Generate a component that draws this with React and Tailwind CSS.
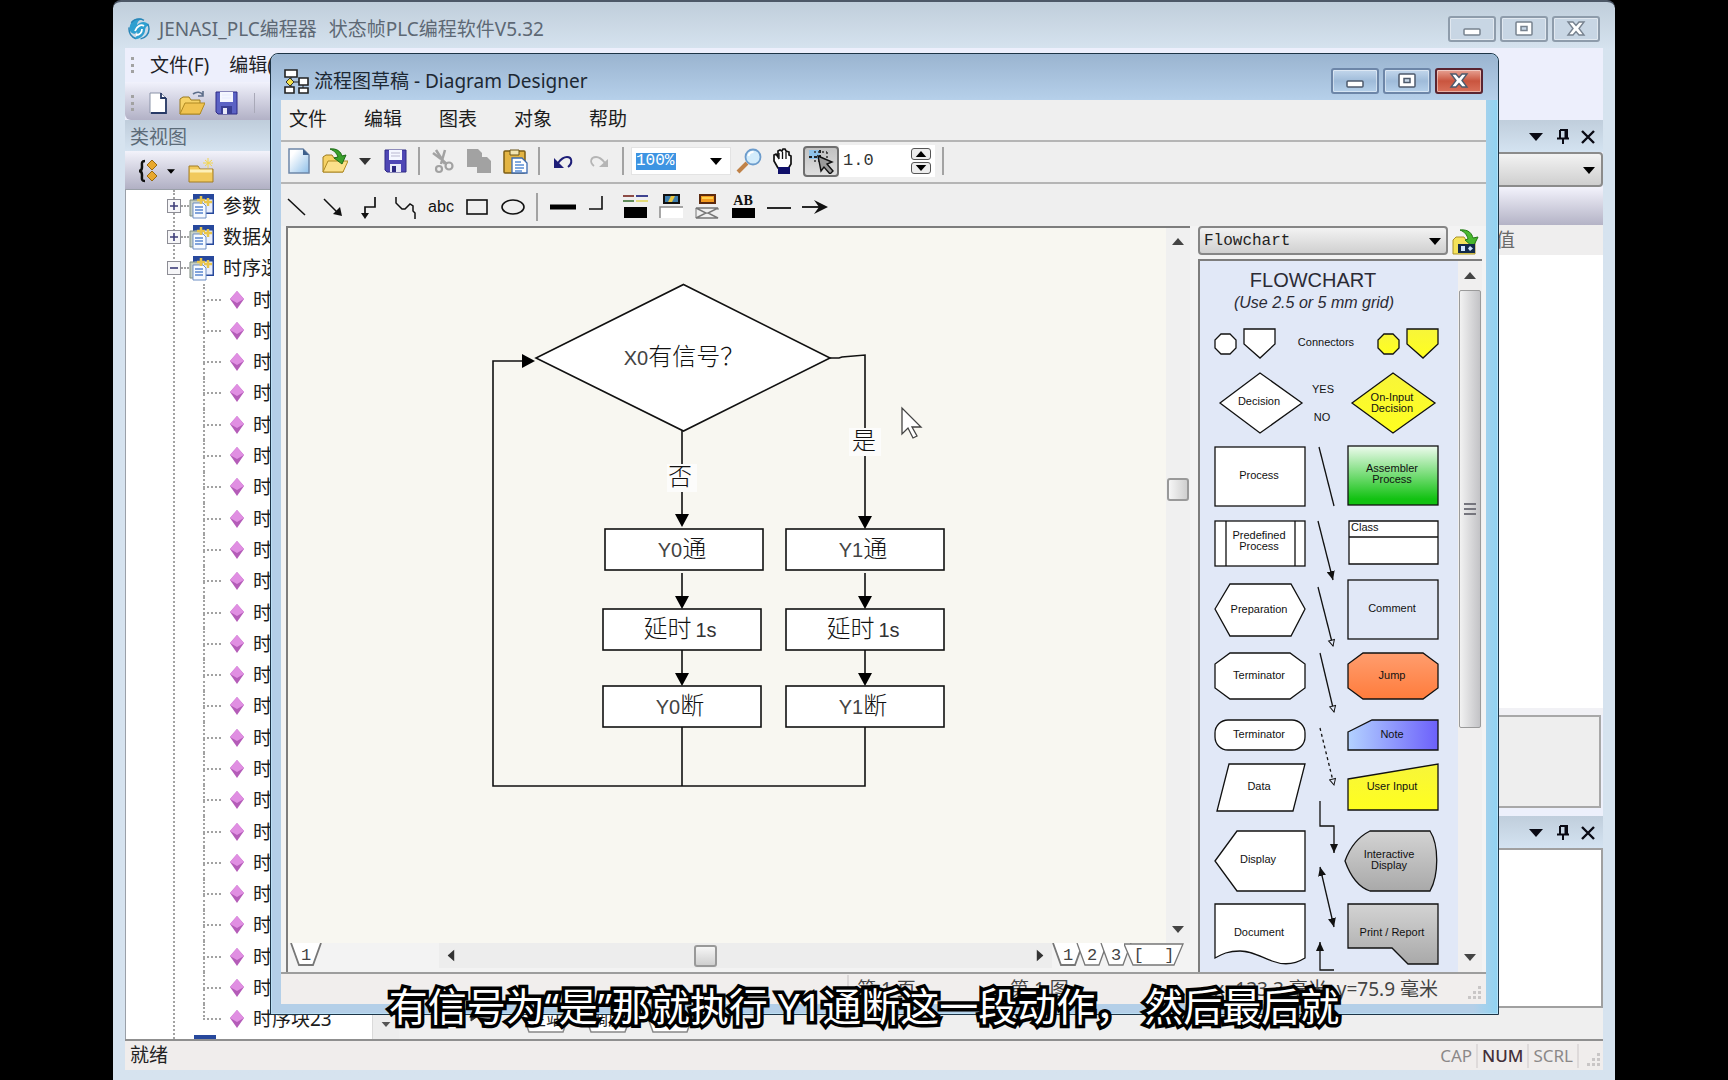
const UI = 'font-["Noto_Sans","Noto_Sans_CJK_SC",sans-serif]';
const MONO = 'font-["Liberation_Mono","Noto_Sans_CJK_SC",monospace]';

/* ---------- small shared pieces ---------- */

function Svg({ w = 26, h = 26, children, className = "" }) {
  return (
    <svg width={w} height={h} viewBox={`0 0 ${w} ${h}`} fill="none" className={`block shrink-0 ${className}`} aria-hidden="true">
      {children}
    </svg>
  );
}

function Down({ w = 14, h = 8, className = "" }) {
  return (
    <svg width={w} height={h} viewBox="0 0 14 8" className={`block shrink-0 ${className}`} aria-hidden="true">
      <path d="M0 0h14L7 8z" fill="currentColor" />
    </svg>
  );
}

function Grip() {
  return (
    <Svg w={14} h={14}>
      <path d="M10 0h3v3h-3zM5 5h3v3H5zM10 5h3v3h-3zM0 10h3v3H0zM5 10h3v3H5zM10 10h3v3h-3z" fill="#c9c6c6" />
    </Svg>
  );
}

function CaptionButton({ kind, active }) {
  const tone = active
    ? kind === "close"
      ? "border-[#5a2430] bg-linear-to-b from-[#e6a193] via-[#c9553f] to-[#d9705a]"
      : "border-[#6d86a8] bg-linear-to-b from-[#c3d7ec] via-[#9fbbd9] to-[#b5d0ea]"
    : "border-[#8e9cab] bg-[#c8d6e4]";
  const line = active ? "#4d5a6c" : "#77828f";
  return (
    <button type="button" aria-label={kind} className={`w-12 h-[26px] rounded-[3px] border-2 flex items-center justify-center shadow-[inset_0_0_0_1px_rgba(255,255,255,0.45)] ${tone}`}>
      <Svg w={20} h={18}>
        {kind === "minimize" && <rect x="2" y="9" width="16" height="6" rx="1" fill="#fff" stroke={line} strokeWidth="1.5" />}
        {kind === "maximize" && (
          <>
            <rect x="2" y="2" width="16" height="13" rx="1" fill="#fff" stroke={line} strokeWidth="1.5" />
            <rect x="7" y="6.5" width="6" height="4" fill="#c8d8e8" stroke={line} strokeWidth="1.5" />
          </>
        )}
        {kind === "close" && (
          <path d="M2 2h5l3 3.500L13 2h5l-5 6.500 5 6.500h-5l-3-3.500L7 15H2l5-6.500z" fill="#fff" stroke={line} strokeWidth="1.4" />
        )}
      </Svg>
    </button>
  );
}

function CaptionButtons({ active }) {
  return (
    <div className="flex gap-1">
      <CaptionButton kind="minimize" active={active} />
      <CaptionButton kind="maximize" active={active} />
      <CaptionButton kind="close" active={active} />
    </div>
  );
}

/* ---------- icons ---------- */

function FileIcon() {
  return (
    <Svg>
      <path d="M3 1h14l6 6v18H3z" fill="url(#page)" stroke="#6d87a8" strokeWidth="1.5" />
      <path d="M17 1v6h6z" fill="#3d5f8c" />
      <defs>
        <linearGradient id="page" x1="0" y1="0" x2="1" y2="1">
          <stop offset="0.2" stopColor="#fff" />
          <stop offset="1" stopColor="#8fc0ea" />
        </linearGradient>
      </defs>
    </Svg>
  );
}

function PlainFileIcon() {
  return (
    <Svg>
      <path d="M5 3h11l5 5v15H5z" fill="#fff" stroke="#8a93a8" />
      <path d="M16 3v5h5M21 8v15H6" stroke="#283a66" strokeWidth="1.8" />
    </Svg>
  );
}

function FolderIcon({ arrow }) {
  return (
    <Svg>
      <path d="M1 24V9l3-2h6l2 3h9v14z" fill="#f6d266" stroke="#9b7a1d" />
      <path d="M1 24l5-11h20l-5 11z" fill={arrow ? "#fbe08a" : "#f0c350"} stroke="#b08a22" />
      {arrow === "green" ? (
        <path d="M8 1c7-1 11 3 12 7l4-1-4 9-8-6 4-1c-1-3-3-6-8-8z" fill="#3aa02c" stroke="#1e6b17" />
      ) : (
        <path d="M14 4c4-3 8-2 10 1M24 1v5h-5" stroke="#5d6e8a" strokeWidth="1.6" />
      )}
    </Svg>
  );
}

function StencilFolderIcon() {
  return (
    <Svg w={28} h={28}>
      <path d="M1 26V12l3-3h8l2 3h9v14z" fill="#f4e25a" stroke="#a9922a" />
      <path d="M8 2c9-1 12 4 13 8l5-1-5 10-8-7 3-1c-1-4-3-7-8-9z" fill="#49b82e" stroke="#257a17" />
      <rect x="6" y="16" width="17" height="9" fill="#122a4a" />
      <path d="M9 18h4v5H9zM18 18l3 2.500-3 2.500-2-2.500z" fill="#cfe6ff" />
    </Svg>
  );
}

function SaveIcon({ solid }) {
  return (
    <Svg>
      <path d="M3 2h21v22H5l-2-2z" fill={solid ? "#5b62c4" : "#4f47b5"} stroke="#2f2a86" />
      <path d="M7 2h13v10H7z" fill="#f4f6ff" />
      <path d="M9 5h9M9 8h9" stroke={solid ? "#e7eaff" : "#b9b7cf"} />
      <path d="M8 16h11v8H8z" fill={solid ? "#3a3f94" : "#e8e9f7"} />
      <path d="M10 18h4v6h-4z" fill={solid ? "#e8e9f7" : "#2b2780"} />
    </Svg>
  );
}

function CutIcon() {
  return (
    <Svg>
      <path d="M6 2l9 14M15 2l-4 14M3 5l8 6" stroke="#a2a2a2" strokeWidth="2.5" />
      <circle cx="9" cy="21" r="3" stroke="#a2a2a2" strokeWidth="2.2" />
      <circle cx="19" cy="18" r="3.5" stroke="#a2a2a2" strokeWidth="2.2" />
      <path d="M12 12l5 4" stroke="#a2a2a2" strokeWidth="2.5" />
    </Svg>
  );
}

function CopyIcon() {
  return (
    <Svg>
      <path d="M1 1h11l4 4v4h5l4 4v12H11v-6H1z" fill="#a2a2a2" />
    </Svg>
  );
}

function PasteIcon() {
  return (
    <Svg>
      <rect x="2" y="3" width="21" height="22" rx="1" fill="#e3b443" stroke="#7d5d15" strokeWidth="1.5" />
      <path d="M8 2h9v5H8z" fill="#f3e5b0" stroke="#6b5419" />
      <path d="M10 10h10l5 5v10H10z" fill="#fff" stroke="#3d6bb0" strokeWidth="1.3" />
      <path d="M13 14h6M13 17h9M13 20h9M13 23h7" stroke="#5a8fd6" strokeWidth="1.3" />
    </Svg>
  );
}

function UndoIcon({ redo }) {
  return (
    <Svg>
      {redo ? (
        <>
          <path d="M8 18c-5-4-3-9 2-9 4 0 6 2 9 6" stroke="#b5b5b5" strokeWidth="1.8" />
          <path d="M22 11v8h-9z" fill="#b5b5b5" />
        </>
      ) : (
        <>
          <path d="M18 19c5-4 4-10-1-10-4 0-6 2-9 6" stroke="#1e1e78" strokeWidth="2" />
          <path d="M4 10v10h10z" fill="#1e1e78" />
        </>
      )}
    </Svg>
  );
}

function ZoomIcon() {
  return (
    <Svg>
      <path d="M2 24l9-9" stroke="#c08248" strokeWidth="4" />
      <circle cx="17" cy="9" r="7.5" fill="#d3ecfb" stroke="#6c9ccc" strokeWidth="1.8" />
      <path d="M12.500 8a5 5 0 0 1 5-4" stroke="#fff" strokeWidth="2" />
    </Svg>
  );
}

function HandIcon() {
  return (
    <Svg>
      <path d="M8 20l-4-7V7l2-1 2 3V3l2-1 2 1 1-2h2l1 2 3 1v3l2 1v8l-3 5z" fill="#fff" stroke="#111" strokeWidth="1.7" />
      <path d="M9 5v6M12.500 4v7M16 4v7" stroke="#111" strokeWidth="1.3" />
      <path d="M8 19h12v7H8z" fill="#10106a" />
    </Svg>
  );
}

function SnapIcon() {
  return (
    <Svg w={28}>
      <path d="M2 2h11v9H2z" fill="#8ec3ea" />
      <path d="M2 9h12M13 2v14" stroke="#222" strokeWidth="2" strokeDasharray="3 2" />
      <path d="M7 4h13M7 13h10M20 4v6" stroke="#333" strokeWidth="1.5" strokeDasharray="2 2" />
      <path d="M11 8l14 6-5 2 6 7-3 3-6-7-3 4z" fill="#9a9a9a" stroke="#111" strokeWidth="1.4" />
    </Svg>
  );
}

const DRAW_TOOLS = [
  ["直线", <path d="M4 5l17 16" stroke="#111" strokeWidth="1.5" />],
  ["箭头", <><path d="M4 5l15 15" stroke="#111" strokeWidth="1.5" /><path d="M22 22l-9-2 7-7z" fill="#111" /></>],
  ["折线", <><path d="M19 3v10H9v9" stroke="#111" strokeWidth="1.7" /><path d="M5 19h8l-4 6z" fill="#111" /></>],
  ["曲线", <path d="M4 3v6l6 6h3l5-5 3 2v5l2 2v6" stroke="#111" strokeWidth="1.5" />],
  ["文本", null],
  ["矩形", <rect x="3" y="6" width="20" height="14" stroke="#111" strokeWidth="1.6" />],
  ["椭圆", <ellipse cx="13" cy="13" rx="11" ry="7" stroke="#111" strokeWidth="1.6" />],
];

const STYLE_TOOLS = [
  ["线宽", <path d="M0 13h26" stroke="#000" strokeWidth="5" />],
  ["拐角", <path d="M3 15h13V2" stroke="#111" strokeWidth="1.6" />],
  ["线条颜色", <><path d="M1 2h11" stroke="#8d4b45" strokeWidth="2" /><path d="M14 2h12" stroke="#3e4390" strokeWidth="2" /><path d="M1 7h11" stroke="#5f8a5a" strokeWidth="2" /><path d="M14 7h12" stroke="#e4dc7a" strokeWidth="2" /><path d="M2 13h23v11H2z" fill="#000" /></>],
  ["填充颜色", <><path d="M6 1h15v8H6z" fill="#3f7fae" stroke="#111" strokeWidth="2" /><path d="M13 2h4l-3 6h-4z" fill="#e9c640" /><path d="M2 13h23v11H2z" fill="#fff" /><path d="M2 24V13h23" stroke="#8b8b8b" strokeWidth="1.5" /></>],
  ["渐变", <><path d="M6 1h15v8H6z" fill="#f39a1f" stroke="#5d2a0e" strokeWidth="2" /><path d="M8 3h11v2H8z" fill="#ffd04a" /><path d="M2 14h22L14 19l10 5H2l10-5z" stroke="#777" strokeWidth="1.4" /><path d="M2 14v10M24 14v2" stroke="#777" /></>],
  ["文字颜色", <><text x="13" y="11" textAnchor="middle" fontFamily="Liberation Serif" fontSize="14" fontWeight="700" fill="#111">AB</text><path d="M2 14h23v10H2z" fill="#000" /></>],
  ["无箭头", <path d="M1 14h24" stroke="#111" strokeWidth="1.8" />],
  ["有箭头", <><path d="M0 13h22" stroke="#111" strokeWidth="1.8" /><path d="M12 6l14 7-14 7 5-7z" fill="#111" /></>],
];

function Tool({ label, children, className = "w-8" }) {
  return (
    <button type="button" aria-label={label} className={`flex items-center justify-center shrink-0 ${className}`}>
      {children}
    </button>
  );
}

function Sep() {
  return (
    <div className="w-2 shrink-0 flex justify-center">
      <div className="w-0.5 h-7 bg-[#a3a3a3]" />
    </div>
  );
}

/* ---------- programmer window (behind) ---------- */

function Dots({ className }) {
  return <div className={`border-dotted border-[#a2a2a2] ${className}`} />;
}

function ClassIcon() {
  return (
    <Svg>
      <path d="M4 1h21v20H4z" fill="#27489c" />
      <path d="M5 6h19v14H5z" fill="#e8eefc" stroke="#27489c" />
      <path d="M1 7h12v16H1z" fill="#c7d0c4" stroke="#7d8b80" />
      <path d="M4 10h10l3 3v12H4z" fill="#f6faff" stroke="#6f8fc4" />
      <path d="M6 14h8M6 17h8M6 20h8" stroke="#5a86cf" strokeWidth="1.4" />
      <path d="M12 3v8M8 7h8M19 5v8M15 9h8" stroke="#e9c54a" strokeWidth="2.5" />
    </Svg>
  );
}

function GroupRow({ label, open }) {
  return (
    <li className="flex-1 flex items-center pl-[41px]">
      <Svg w={14} h={14} className="bg-white">
        <rect x="0.5" y="0.5" width="13" height="13" fill="#f6f6f8" stroke="#8d8d95" />
        <path d={open ? "M3 7h8" : "M3 7h8M7 3v8"} stroke="#3c3c78" strokeWidth="1.6" />
      </Svg>
      <Dots className="w-2 border-t-2" />
      <ClassIcon />
      <span className="ml-2 whitespace-nowrap">{label}</span>
    </li>
  );
}

function LeafRow({ label, last }) {
  return (
    <li className="flex-1 flex items-stretch pl-[77px]">
      <div className="w-[18px] flex flex-col">
        <Dots className="flex-1 border-l-2 border-b-2" />
        <Dots className={`flex-1 ${last ? "" : "border-l-2"}`} />
      </div>
      <div className="flex items-center">
        <Svg w={16} h={22} className="mx-2">
          <path d="M8 2l7 8-7 10-7-10z" fill="#b45cb8" />
          <path d="M8 2l7 8-7 4-7-4z" fill="#e08fe2" />
        </Svg>
        <span className="whitespace-nowrap">{label}</span>
      </div>
    </li>
  );
}

function ClassView() {
  const leaves = Array.from({ length: 24 }, (_, i) => `时序块${i}`);
  return (
    <aside className="w-[274px] shrink-0 flex flex-col">
      <div className="h-[31px] shrink-0 flex items-center pl-[5px] pt-1 text-[19px] text-[#5c6b78] bg-linear-to-b from-[#bfcddb] to-[#d5e3f0]">类视图</div>
      <div className="h-[38px] shrink-0 flex items-center pl-3 pt-0.5 gap-2 bg-linear-to-b from-[#f3f3fb] to-[#b1b0c4]">
        <Svg w={22} h={24}>
          <path d="M8 2C4 2 5 5 5 8s-1 4-3 4c2 0 3 1 3 4s-1 6 3 6" stroke="#111" strokeWidth="2.5" />
          <path d="M15 1l5 5-5 5-5-5zM15 12l5 5-5 5-5-5z" fill="#e8a82c" stroke="#996a12" />
        </Svg>
        <Down w={8} h={5} className="text-black" />
        <Svg w={28} className="ml-1">
          <path d="M2 24V8h9l2 3h13v13z" fill="#f1c95c" stroke="#a27c24" />
          <path d="M3 13h22" stroke="#fdf0b9" strokeWidth="3" />
          <path d="M21 0v10M16 5h10M18 2l7 6M25 2l-7 6" stroke="#f4d64e" />
        </Svg>
      </div>
      <div className="flex-1 min-h-0 flex bg-white border-l border-t border-[#9aa0a8] overflow-hidden">
        <div className="flex-1 min-w-0 relative flex flex-col">
          <Dots className="absolute left-[47px] inset-y-0 border-l-2" />
          <ul className="relative flex-1 flex flex-col text-[19px] leading-5 text-[#1c1c1c]">
            <GroupRow label="参数" />
            <GroupRow label="数据处理" />
            <GroupRow label="时序逻辑" open />
            {leaves.map((l, i) => (
              <LeafRow key={l} label={l} last={i === leaves.length - 1} />
            ))}
          </ul>
          <div className="relative h-1 w-[22px] ml-[68px] bg-[#27489c]" />
        </div>
        <div className="w-[27px] shrink-0 bg-[#ededed] flex items-end justify-center pb-3 border-l border-[#dadada]">
          <Down w={10} h={5} className="text-[#555]" />
        </div>
      </div>
    </aside>
  );
}

function DockTitle() {
  return (
    <div className="h-8 shrink-0 flex items-center justify-end gap-3 pr-2 pt-0.5 text-[#0a0a14] bg-linear-to-b from-[#c0cedc] to-[#d4e3f1]">
      <Down w={14} h={8} className="mr-0.5" />
      <Svg w={12} h={16}>
        <path d="M3 1h7v8M3 1v8M0 9.500h12M6 10v5M8.500 1v8" stroke="currentColor" strokeWidth="2" />
      </Svg>
      <Svg w={14} h={14}>
        <path d="M1 1l12 12M13 1L1 13" stroke="currentColor" strokeWidth="2.4" />
      </Svg>
    </div>
  );
}

function PropertyDock() {
  return (
    <aside className="w-[320px] shrink-0 flex flex-col bg-[#edf0fb]">
      <DockTitle />
      <div className="relative shrink-0">
        <select aria-label="对象" className="block appearance-none w-full h-[35px] rounded-[4px] border-2 border-[#8b8b8b] bg-linear-to-b from-[#f3f3f3] to-[#cfcfcf]" />
        <Down w={12} h={7} className="absolute right-2 top-[15px] text-black" />
      </div>
      <div className="h-[38px] shrink-0 bg-linear-to-b from-[#f3f3fc] to-[#b4b3c6]" />
      <div className="h-[30px] shrink-0 bg-[#efeeee] flex justify-end items-center text-[19px] text-[#6a6a6a]">
        <div className="w-[107px]">值</div>
      </div>
      <div className="flex-1 min-h-0 bg-white" />
      <div className="h-[7px] shrink-0 bg-[#f1f1f5]" />
      <div className="h-[93px] shrink-0 mr-0.5 bg-[#eeeeee] border-2 border-[#a8a8a8]" />
      <div className="h-2 shrink-0" />
      <DockTitle />
      <div className="h-40 shrink-0 bg-white border-2 border-[#a0a0a0]" />
      <div className="h-[31px] shrink-0 bg-[#efefef]" />
    </aside>
  );
}

function SheetTab({ label }) {
  return (
    <div className="relative w-[54px] h-7 flex justify-center text-[17px] leading-6 text-[#222]">
      <Svg w={54} h={28} className="absolute inset-0">
        <path d="M1 0l9 25h34l9-25" fill="#fff" stroke="#888" strokeWidth="1.5" />
      </Svg>
      <span className="relative">{label}</span>
    </div>
  );
}

function ProgrammerWindow() {
  return (
    <div className="h-full flex flex-col rounded-t-lg border-t-2 border-[#4d5867] bg-linear-to-b from-[#c0cedb] to-[#d6e3ef] to-[48px] px-3 pb-[10px]">
      <header className="h-[46px] shrink-0 flex items-center justify-between pl-0.5 pt-2 pr-[3px]">
        <div className="flex items-center gap-2">
          <Svg w={24} h={24}>
            <path d="M3 14C1 6 8 0 15 2c-3 1-5 3-5 6 4-4 9-4 12 0-3 1-4 3-4 6-1 5-6 9-11 8 3-2 4-5 3-7-2 3-5 2-7-1z" fill="#2f9fd0" />
            <circle cx="12" cy="12" r="10" stroke="#2a86b8" strokeWidth="1.5" strokeDasharray="14 5" />
            <path d="M8 14c2-5 6-7 9-5M9 18c4 0 6-3 6-6" stroke="#fff" strokeWidth="1.8" />
          </Svg>
          <h1 className="flex gap-3 text-[19px] text-[#5d6874] whitespace-nowrap">
            <span>JENASI_PLC编程器</span>
            <span>状态帧PLC编程软件V5.32</span>
          </h1>
        </div>
        <CaptionButtons />
      </header>
      <nav className="h-[34px] shrink-0 flex items-center gap-5 pl-[6px] bg-[#edeffc] text-[19px] text-[#1f1f28]">
        <Dots className="h-4 border-l-[3px] -mr-1" />
        <button type="button">文件(F)</button>
        <button type="button">编辑(E)</button>
      </nav>
      <div className="h-[38px] shrink-0 flex bg-[#edeffc]">
        <div className="flex items-center gap-[6px] w-[320px] pl-[6px] pt-1 rounded-bl-md bg-linear-to-b from-[#f1f2fc] to-[#b2b1c6]">
          <Dots className="h-4 border-l-[3px] mr-1" />
          <Tool label="新建" className="w-7"><PlainFileIcon /></Tool>
          <Tool label="打开" className="w-7"><FolderIcon /></Tool>
          <Tool label="保存" className="w-7"><SaveIcon solid /></Tool>
          <div className="w-px h-5 ml-2 bg-[#a9a9b8]" />
        </div>
      </div>
      <div className="flex-1 min-h-0 flex border-b-2 border-[#8f8f8f]">
        <ClassView />
        <main className="flex-1 flex flex-col justify-end bg-[#efefef]">
          <div className="flex items-start pl-[48px] h-[32px] gap-3 text-[#333]">
            <Svg w={60} h={20}>
              <path d="M14 4v10l-6-5zM24 4l7 5-7 5zM44 4l6 5-6 5zM52 4v10" fill="#333" stroke="#333" />
            </Svg>
            <div className="flex gap-2">
              <SheetTab label="主站" />
              <SheetTab label="调度" />
              <SheetTab label="宏库" />
            </div>
          </div>
        </main>
        <PropertyDock />
      </div>
      <footer className="h-[29px] shrink-0 flex items-center justify-between bg-[#f0edec] pl-[5px] pr-0.5 text-[19px] text-[#222]">
        <span>就绪</span>
        <div className="flex items-center text-[17px] text-[#8b8888]">
          <span className="pr-1 border-r-2 border-[#dedada] leading-6">CAP</span>
          <span className="px-1 border-r-2 border-[#dedada] leading-6 font-medium text-[#43303a]">NUM</span>
          <span className="px-1 border-r-2 border-[#dedada] leading-6">SCRL</span>
          <div className="pl-2 pt-2"><Grip /></div>
        </div>
      </footer>
    </div>
  );
}

/* ---------- flowchart drawing ---------- */

const STEPS = [
  { x: 317, y: 301, a: "Y0", b: "通" },
  { x: 315, y: 381, b: "延时", c: "1s" },
  { x: 315, y: 458, a: "Y0", b: "断" },
  { x: 498, y: 301, a: "Y1", b: "通" },
  { x: 498, y: 381, b: "延时", c: "1s" },
  { x: 498, y: 458, a: "Y1", b: "断" },
];

function Label({ x, y, a, b, c }) {
  return (
    <text x={x} y={y} textAnchor="middle" fontSize="24" fontWeight="300" fill="#111" fontFamily="Liberation Sans, Noto Sans CJK SC, sans-serif">
      {a && <tspan fontSize="20" fill="#444">{a}</tspan>}
      {b}
      {c && <tspan fontSize="20" fill="#333" dx="4">{c}</tspan>}
    </text>
  );
}

function Tip({ x, y }) {
  return <path d={`M${x - 7} ${y - 13}h14l-7 13z`} fill="#000" />;
}

function Flowchart() {
  return (
    <svg width="880" height="717" viewBox="0 0 880 717" fill="none" className="block" role="img" aria-label="流程图">
      <g stroke="#111" strokeWidth="1.6">
        <path d="M395.500 56.500L542 130 395.500 203 248 130z" fill="#fff" />
        <path d="M542 130h9l3-1 23-2v166" />
        <path d="M394 203v90M394 345v26M394 422v26M577 345v26M577 422v26" />
        <path d="M394 499v59M577 499v59H205V133h32" />
      </g>
      <path d="M234 126v14l13-7z" fill="#000" />
      <Tip x={394} y={299} />
      <Tip x={577} y={301} />
      <Tip x={394} y={381} />
      <Tip x={577} y={381} />
      <Tip x={394} y={458} />
      <Tip x={577} y={458} />
      <rect x="379" y="236" width="30" height="28" fill="#fcfcfb" />
      <rect x="561" y="200" width="32" height="28" fill="#fcfcfb" />
      <Label x={392} y={257} b="否" />
      <Label x={576} y={221} b="是" />
      <Label x={396} y={137} a="X0" b="有信号？" />
      {STEPS.map((s) => (
        <g key={`${s.x}-${s.y}`}>
          <rect x={s.x} y={s.y} width="158" height="41" fill="#fff" stroke="#111" strokeWidth="1.6" />
          <Label x={s.x + 77} y={s.y + 28} a={s.a} b={s.b} c={s.c} />
        </g>
      ))}
      <path d="M614 180v26l6-6 5 10 4-2-5-9h9z" fill="#fff" stroke="#444" strokeWidth="1.3" />
    </svg>
  );
}

function StencilText({ x, y, children, anchor = "middle" }) {
  return (
    <text x={x} y={y} textAnchor={anchor} fontSize="11" stroke="none" fill="#111">
      {children}
    </text>
  );
}

function Stencil() {
  return (
    <svg width="258" height="711" viewBox="0 0 258 711" className="block" fontFamily="Liberation Sans, sans-serif" role="img" aria-label="Flowchart 模板">
      <defs>
        <linearGradient id="sYellow" x2="0" y2="1"><stop stopColor="#f7f53a" /><stop offset="1" stopColor="#ffff1f" /></linearGradient>
        <linearGradient id="sGreen" x2="0" y2="1"><stop stopColor="#eefbee" /><stop offset="0.9" stopColor="#12c212" /></linearGradient>
        <linearGradient id="sOrange" x2="0" y2="1"><stop stopColor="#ff9d6e" /><stop offset="1" stopColor="#ff7c3c" /></linearGradient>
        <linearGradient id="sBlue"><stop stopColor="#b3d2ff" /><stop offset="1" stopColor="#6c60fb" /></linearGradient>
        <linearGradient id="sGray" x2="0" y2="1"><stop stopColor="#d3d3d3" /><stop offset="1" stopColor="#a9a9a9" /></linearGradient>
        <marker id="tipFull" markerUnits="userSpaceOnUse" markerWidth="10" markerHeight="8" refX="9" refY="4" orient="auto-start-reverse"><path d="M0 0l9 4-9 4z" fill="#111" stroke="none" /></marker>
        <marker id="tipOpen" markerUnits="userSpaceOnUse" markerWidth="9" markerHeight="8" refX="7" refY="4" orient="auto"><path d="M1 1l6 3-6 3z" fill="#e1e8f7" stroke="#111" /></marker>
      </defs>
      <text x="113" y="26" textAnchor="middle" fontSize="20" fill="#2b2b35">FLOWCHART</text>
      <text x="114" y="47" textAnchor="middle" fontSize="16" fontStyle="italic" fill="#2b2b35">(Use 2.5 or 5 mm grid)</text>

      <g fill="#fff" stroke="#111" strokeWidth="1.3">
        <path d="M21 73h9l6 6v8l-6 6h-9l-6-6v-8z" />
        <path d="M44 68h31v15L60 97 44 83z" />
        <path d="M20 142l40-30 42 30-42 30z" />
        <rect x="15" y="186" width="90" height="59" />
        <rect x="15" y="260" width="90" height="45" />
        <path d="M26 260v45M95 260v45" />
        <path d="M15 348l15-25h61l14 25-14 27H30z" />
        <path d="M30 392h60l15 11v24l-15 11H30l-15-11v-24z" />
        <rect x="15" y="459" width="90" height="30" rx="13" />
        <path d="M29 503h76l-12 47H17z" />
        <path d="M15 600l22-30h68v60H37z" />
        <path d="M15 643h90v54c-8 5-20 8-33 3S52 690 40 690s-18 3-25 7z" />
        <path d="M149 260h89v43h-89zM149 276h89" />
      </g>
      <g stroke="#111" strokeWidth="1.3">
        <path d="M184 73h9l6 6v8l-6 6h-9l-6-6v-8z" fill="url(#sYellow)" />
        <path d="M207 68h31v15l-15 14-16-14z" fill="url(#sYellow)" />
        <path d="M152 142l41-30 42 30-42 30z" fill="url(#sYellow)" />
        <rect x="148" y="185" width="90" height="59" fill="url(#sGreen)" />
        <rect x="148" y="319" width="90" height="59" fill="none" />
        <path d="M163 392h60l15 11v24l-15 11h-60l-15-11v-24z" fill="url(#sOrange)" />
        <path d="M148 471l24-12h66v30h-90z" fill="url(#sBlue)" />
        <path d="M148 518l90-15v46h-90z" fill="url(#sYellow)" />
        <path d="M170 570h60c9 14 9 44 0 60h-60c-12-4-20-16-25-30 5-14 13-24 25-30z" fill="url(#sGray)" />
        <path d="M148 643h90v60h-30l-16-16h-44z" fill="url(#sGray)" />
      </g>
      <g fill="none" stroke="#111" strokeWidth="1.3">
        <path d="M119 186l15 59" />
        <path d="M118 260l15 59" markerEnd="url(#tipFull)" />
        <path d="M118 326l15 59" markerEnd="url(#tipOpen)" />
        <path d="M120 392l14 59" markerEnd="url(#tipOpen)" />
        <path d="M120 467l14 57" strokeDasharray="3 3" markerEnd="url(#tipOpen)" />
        <path d="M120 540v25h14v27" markerEnd="url(#tipFull)" />
        <path d="M120 606l14 60" markerStart="url(#tipFull)" markerEnd="url(#tipFull)" />
        <path d="M134 709h-14v-28" markerEnd="url(#tipFull)" />
      </g>

      <StencilText x={126} y={85}>Connectors</StencilText>
      <StencilText x={59} y={144}>Decision</StencilText>
      <StencilText x={123} y={132}>YES</StencilText>
      <StencilText x={122} y={160}>NO</StencilText>
      <StencilText x={192} y={140}>On-Input</StencilText>
      <StencilText x={192} y={151}>Decision</StencilText>
      <StencilText x={59} y={218}>Process</StencilText>
      <StencilText x={192} y={211}>Assembler</StencilText>
      <StencilText x={192} y={222}>Process</StencilText>
      <StencilText x={59} y={278}>Predefined</StencilText>
      <StencilText x={59} y={289}>Process</StencilText>
      <StencilText x={151} y={270} anchor="start">Class</StencilText>
      <StencilText x={59} y={352}>Preparation</StencilText>
      <StencilText x={192} y={351}>Comment</StencilText>
      <StencilText x={59} y={418}>Terminator</StencilText>
      <StencilText x={192} y={418}>Jump</StencilText>
      <StencilText x={59} y={477}>Terminator</StencilText>
      <StencilText x={192} y={477}>Note</StencilText>
      <StencilText x={59} y={529}>Data</StencilText>
      <StencilText x={192} y={529}>User Input</StencilText>
      <StencilText x={58} y={602}>Display</StencilText>
      <StencilText x={189} y={597}>Interactive</StencilText>
      <StencilText x={189} y={608}>Display</StencilText>
      <StencilText x={59} y={675}>Document</StencilText>
      <StencilText x={192} y={675}>Print / Report</StencilText>
    </svg>
  );
}

/* ---------- Diagram Designer window ---------- */

function PageTab({ label, active, className = "w-8", wide }) {
  return (
    <button type="button" className={`relative h-[25px] -mr-2 flex items-center justify-center whitespace-pre text-[17px] text-[#444] ${MONO} ${className}`}>
      <svg className="absolute inset-0 size-full" viewBox={wide ? "0 0 60 25" : "0 0 32 25"} fill="none" aria-hidden="true">
        <path d={wide ? "M0 1h59l-9 21H9z" : "M1 0l8 22h14l8-22"} fill="#fff" stroke="#777" strokeWidth={active ? 1.8 : 1.3} />
      </svg>
      <span className="relative">{label}</span>
    </button>
  );
}

function Designer() {
  return (
    <section className="absolute left-[157px] right-[116px] top-[53px] bottom-[65px] flex flex-col rounded-t-lg border border-[#1d3446] bg-linear-to-r from-[#b4cfe8] via-[#b4cfe8] via-98% to-[#8fd3f2] pl-[10px] pr-3 pb-[10px] shadow-[inset_0_0_0_1px_rgba(190,230,250,0.7)]">
      <header className="h-[46px] -ml-[10px] -mr-3 pl-3 pr-[15px] pt-2 shrink-0 rounded-t-lg flex items-center justify-between bg-linear-to-b from-[#9ab4d0] to-[#b6d0ea]">
        <div className="flex items-center gap-[5px]">
          <Svg>
            <path d="M2 2h12v7H2zM16 10h9v7h-9zM2 19h9v6H2zM16 20h9v5h-9z" fill="#fff" stroke="#222" strokeWidth="1.6" />
            <path d="M8 9v10M11 14h5M20 17v3" stroke="#222" />
            <path d="M7 10l4 4-4 4-4-4z" fill="#f2e04a" stroke="#333" />
          </Svg>
          <h2 className="text-[19px] text-[#1d2833] whitespace-nowrap">流程图草稿 - Diagram Designer</h2>
        </div>
        <CaptionButtons active />
      </header>

      <nav className="h-[42px] shrink-0 flex items-center gap-[37px] pl-2 pb-0.5 bg-[#efefef] border-b-2 border-[#b5b5b5] text-[19px] text-[#1c1c1c]">
        {["文件", "编辑", "图表", "对象", "帮助"].map((m) => (
          <button key={m} type="button">{m}</button>
        ))}
      </nav>

      <div className="h-[42px] shrink-0 flex items-center gap-1 pl-0.5 pb-0.5 bg-[#efefef] border-b-2 border-[#b5b5b5]">
        <Tool label="新建"><FileIcon /></Tool>
        <Tool label="打开"><FolderIcon arrow="green" /></Tool>
        <Tool label="最近文件" className="w-5"><Down w={12} h={7} className="text-[#333]" /></Tool>
        <Tool label="保存"><SaveIcon /></Tool>
        <Sep />
        <Tool label="剪切"><CutIcon /></Tool>
        <Tool label="复制"><CopyIcon /></Tool>
        <Tool label="粘贴"><PasteIcon /></Tool>
        <Sep />
        <Tool label="撤销"><UndoIcon /></Tool>
        <Tool label="重做"><UndoIcon redo /></Tool>
        <Sep />
        <div className="w-[100px] h-7 shrink-0 flex items-center justify-between px-1 bg-white border border-[#e3e3e3]">
          <input aria-label="缩放" defaultValue="100%" className={`w-10 h-[17px] bg-[#3d94e2] text-white text-[16px] leading-4 ${MONO}`} />
          <Down w={12} h={7} className="text-black mr-1" />
        </div>
        <Tool label="放大镜" className="w-7"><ZoomIcon /></Tool>
        <Tool label="平移"><HandIcon /></Tool>
        <Tool label="对齐网格" className="w-9 h-[31px] rounded-[4px] border-2 border-[#6f6f6f] bg-linear-to-b from-[#c2c2c2] to-[#dedede]"><SnapIcon /></Tool>
        <div className="w-24 h-8 -ml-1 shrink-0 flex items-center justify-between px-1 bg-white">
          <input aria-label="线宽" defaultValue="1.0" className={`w-12 h-5 text-[17px] text-[#333] ${MONO}`} />
          <div className="flex flex-col gap-0.5">
            <button type="button" aria-label="增加" className="w-5 h-3 rounded-[3px] border border-[#555] bg-[#ededed] flex items-center justify-center"><Down w={12} h={6} className="rotate-180" /></button>
            <button type="button" aria-label="减少" className="w-5 h-3 rounded-[3px] border border-[#555] bg-[#ededed] flex items-center justify-center"><Down w={12} h={6} /></button>
          </div>
        </div>
        <Sep />
      </div>

      <div className="h-[42px] shrink-0 flex items-center gap-1 pt-1 bg-[#efefef]">
        {DRAW_TOOLS.map(([name, art]) => (
          <Tool key={name} label={name}>
            {art ? <Svg>{art}</Svg> : <span className='text-[16px] text-[#111] font-["Liberation_Sans",sans-serif]'>abc</span>}
          </Tool>
        ))}
        <Sep />
        <div className="flex gap-1 pl-0.5">
          {STYLE_TOOLS.map(([name, art]) => (
            <Tool key={name} label={name}><Svg>{art}</Svg></Tool>
          ))}
        </div>
      </div>

      <div className="flex-1 min-h-0 flex gap-2 pl-[5px] pr-1 bg-[#f3f3f3]">
        <div className="flex-1 min-w-0 flex flex-col border-t-2 border-l-2 border-[#7d7d7d]">
          <div className="flex-1 min-h-0 flex">
            <div className="flex-1 min-w-0 overflow-hidden bg-[#f8f7f1]"><Flowchart /></div>
            <div className="w-6 shrink-0 flex flex-col items-center py-[10px] bg-[#f0f0f0]">
              <Down w={12} h={7} className="rotate-180 text-[#444]" />
              <div className="grow-[233]" />
              <div className="w-[22px] h-[23px] shrink-0 rounded-[3px] border-2 border-[#999] bg-linear-to-r from-[#f6f6f6] to-[#cfcfcf]" />
              <div className="grow-[424]" />
              <Down w={12} h={7} className="text-[#444]" />
            </div>
          </div>
          <div className="h-[25px] mb-1 shrink-0 flex">
            <PageTab label="1" active className="w-9" />
            <div className="flex-1 ml-[123px] flex items-center px-[6px] bg-[#ededed]">
              <Down w={12} h={7} className="rotate-90 text-[#333]" />
              <div className="grow-[233]" />
              <div className="w-[23px] h-[22px] shrink-0 rounded-[3px] border-2 border-[#999] bg-linear-to-b from-[#f6f6f6] to-[#cfcfcf]" />
              <div className="grow-[312]" />
              <Down w={12} h={7} className="-rotate-90 text-[#333]" />
            </div>
            <div className="flex pr-[14px]">
              <PageTab label="1" active />
              <PageTab label="2" />
              <PageTab label="3" />
              <PageTab label="[  ]" wide className="w-[60px]" />
            </div>
          </div>
        </div>

        <div className="w-[284px] shrink-0 flex flex-col">
          <div className="h-[33px] shrink-0 flex items-start gap-1">
            <div className="relative">
              <select aria-label="模板" className={`block appearance-none w-[250px] h-[29px] pl-1 rounded-[4px] border-2 border-[#868686] bg-linear-to-b from-[#f3f3f3] to-[#d0d0d0] text-[16px] leading-5 text-[#222] ${MONO}`}>
                <option>Flowchart</option>
              </select>
              <Down w={12} h={7} className="absolute right-[7px] top-3 text-black" />
            </div>
            <button type="button" aria-label="载入模板" className="pt-0.5"><StencilFolderIcon /></button>
          </div>
          <div className="flex-1 min-h-0 flex border-t-2 border-l-2 border-[#7d7d7d] bg-[#e1e8f7]">
            <div className="flex-1 min-w-0 overflow-hidden"><Stencil /></div>
            <div className="w-6 shrink-0 flex flex-col items-center bg-[#f0efef]">
              <Down w={12} h={7} className="rotate-180 text-[#444] my-[11px]" />
              <div className="grow-[437] w-[22px] flex flex-col items-center justify-center gap-[3px] rounded-[2px] border border-[#9a9a9a] bg-linear-to-r from-[#f2f2f2] to-[#c3c3c6]">
                <div className="w-3 h-0.5 bg-[#75757d]" />
                <div className="w-3 h-0.5 bg-[#75757d]" />
                <div className="w-3 h-0.5 bg-[#75757d]" />
              </div>
              <div className="grow-[222]" />
              <Down w={12} h={7} className="text-[#444] my-[11px]" />
            </div>
          </div>
        </div>
      </div>

      <footer className="h-8 shrink-0 flex items-center bg-[#f1eeed] border-t-2 border-[#9d9d9d] text-[19px] text-[#444]">
        <div className="flex-1" />
        <div className="w-[155px] pl-2 border-l-2 border-[#dcd8d8]">第 1 页</div>
        <div className="w-[170px] pl-2">第 1 图</div>
        <div className="w-[266px] whitespace-pre text-right">x=133.3 毫米, y=75.9 毫米</div>
        <div className="w-12 pt-2 pr-1 flex justify-end"><Grip /></div>
      </footer>
    </section>
  );
}

export default function App() {
  return (
    <div className={`relative h-screen overflow-hidden bg-black px-[113px] ${UI}`}>
      <div className="relative h-full">
        <ProgrammerWindow />
        <Designer />
      </div>
      <p className="absolute inset-x-0 bottom-[46px] text-center text-[39px] leading-[56px] whitespace-pre text-white [-webkit-text-stroke:7px_black] [paint-order:stroke_fill]">
        有信号为“是”那就执行 Y1通断这一段动作， 然后最后就
      </p>
    </div>
  );
}
